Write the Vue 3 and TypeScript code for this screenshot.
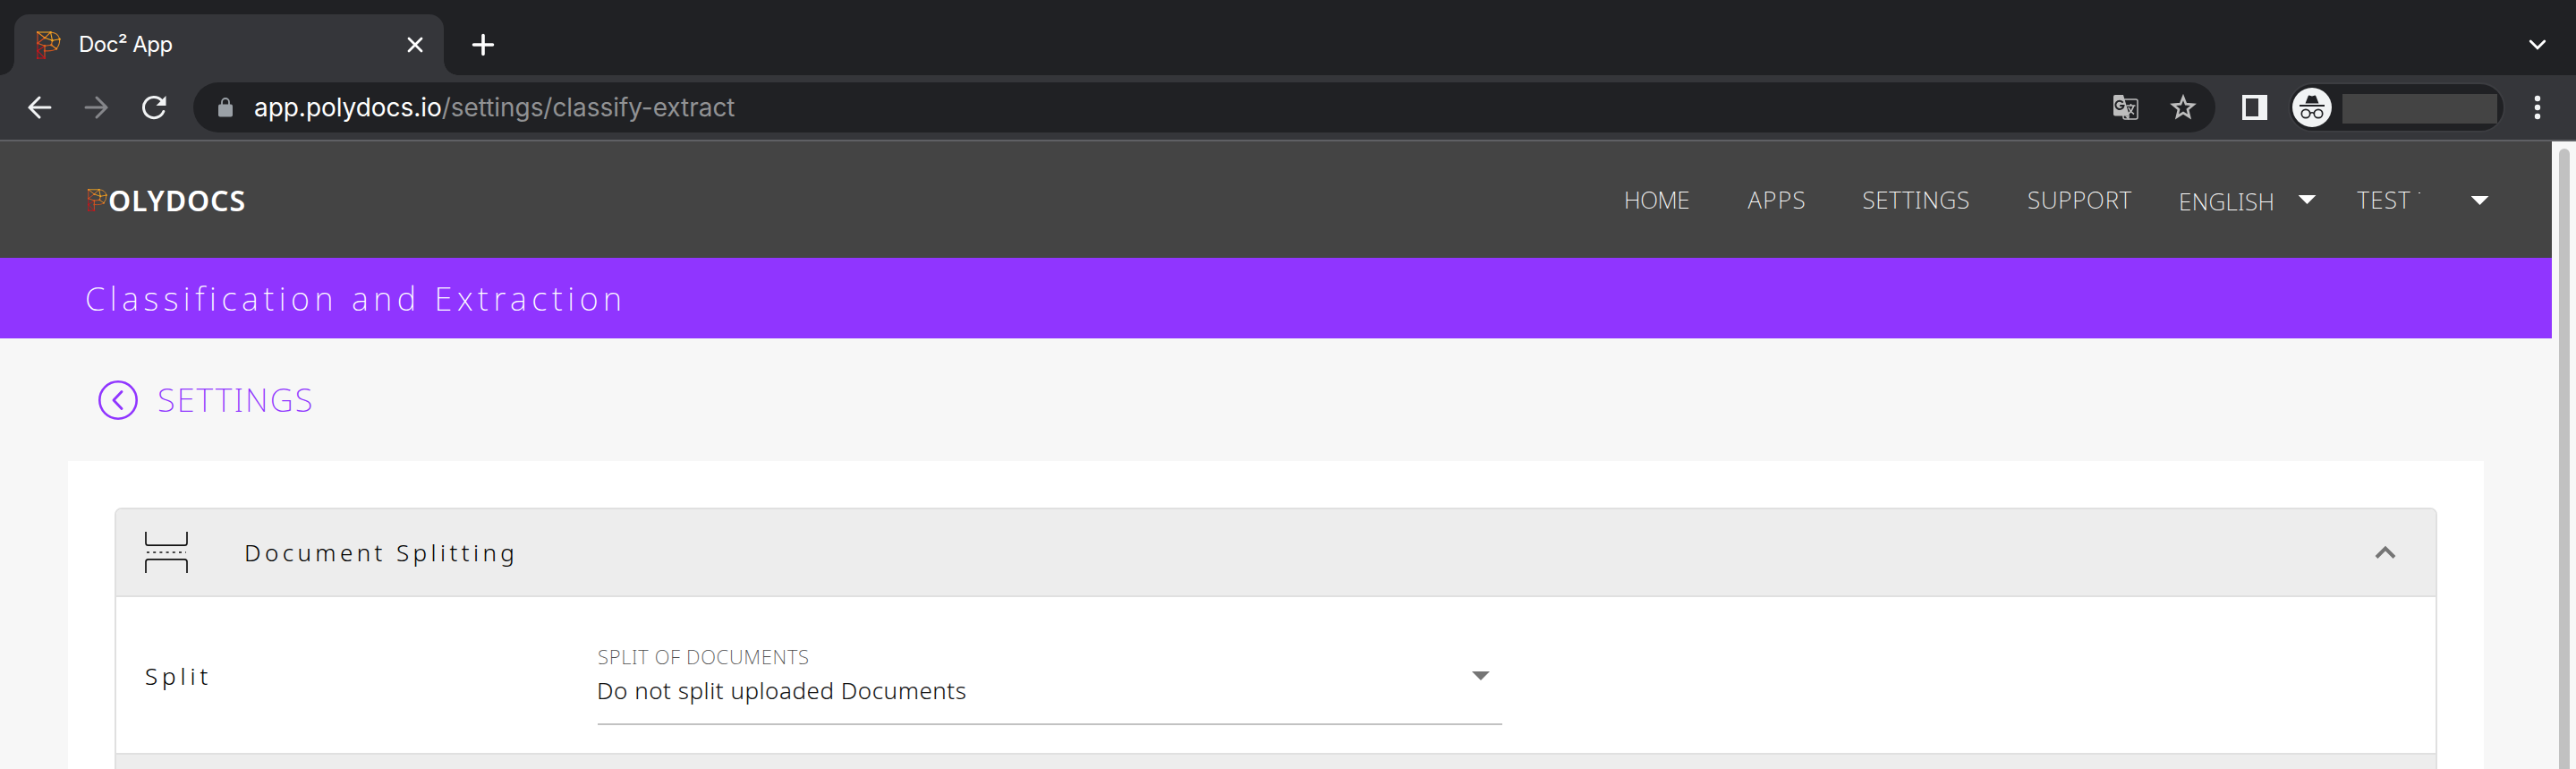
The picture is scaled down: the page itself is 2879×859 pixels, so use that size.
<script setup lang="ts">
import { ref } from 'vue'

interface NavItem { label: string; cls: string }

const nav: NavItem[] = [
  { label: 'HOME', cls: 'home' },
  { label: 'APPS', cls: 'apps' },
  { label: 'SETTINGS', cls: 'settings' },
  { label: 'SUPPORT', cls: 'support' },
]

// Nodes and edges of the wireframe "P" mark
const nodes: [number, number, string][] = [
  [1, 1, '#f08a24'], [15.6, 1, '#f5a623'], [25.6, 8.7, '#f9a01b'], [22, 19.5, '#f08a24'],
  [16.4, 15.3, '#e87b22'], [9, 21.7, '#d8491f'], [9, 30, '#c4161c'], [1, 30, '#c4161c'],
  [1, 21.7, '#c4161c'], [1, 13.3, '#d8491f'], [9, 7.3, '#f08a24'], [17.5, 10.3, '#f5a623'],
  [9, 16.3, '#e0601f'],
]
const edges: [number, number][] = [
  [0, 1], [0, 9], [9, 8], [8, 7], [7, 6], [6, 5], [5, 12], [0, 10], [1, 10], [10, 9], [9, 12],
  [12, 8], [8, 6], [10, 11], [11, 4], [4, 12], [1, 11], [11, 2], [4, 3],
]

const open = ref(true)
</script>

<template>
  <div class="window">
    <svg class="defs" width="0" height="0">
      <defs>
        <symbol id="mark" viewBox="0 0 27 31" preserveAspectRatio="none">
          <line v-for="([a, b], i) in edges" :key="'e' + i" :x1="nodes[a][0]" :y1="nodes[a][1]" :x2="nodes[b][0]" :y2="nodes[b][1]" :stroke="nodes[b][2]" stroke-width="1.100" />
          <path d="M15.6 1Q24 1.500 25.600 8.700Q26 15 22 19.500" fill="none" stroke="#e08c28" stroke-width="1.100" />
          <path d="M22 19.500Q18 22.500 9 21.700" fill="none" stroke="#c8541f" stroke-width="1.100" />
          <circle v-for="(n, i) in nodes" :key="'n' + i" :cx="n[0]" :cy="n[1]" r="1.2" :fill="n[2]" />
        </symbol>
      </defs>
    </svg>

    <div class="tabstrip">
      <div class="tab">
        <svg class="favicon" width="27" height="31"><use href="#mark" /></svg>
        <span class="tab-title">Doc² App</span>
        <svg class="close" width="18" height="18" viewBox="0 0 18 18"><path d="M2 2L16 16M16 2L2 16" stroke="#fff" stroke-width="2.8" stroke-linecap="round" /></svg>
      </div>
      <svg class="plus" width="26" height="26" viewBox="0 0 26 26"><path d="M13 2.500V23.500M2.500 13H23.500" stroke="#fff" stroke-width="3.6" stroke-linecap="round" /></svg>
      <svg class="tabs-menu" width="20" height="12" viewBox="0 0 20 12"><path d="M2.200 2L10 9.800L17.800 2" fill="none" stroke="#fff" stroke-width="2.8" stroke-linecap="round" /></svg>
    </div>

    <div class="toolbar">
      <svg class="back" width="28" height="28" viewBox="0 0 28 28"><path d="M26 14H3M14 3L3 14L14 25" fill="none" stroke="#f1f3f4" stroke-width="3" stroke-linecap="round" /></svg>
      <svg class="forward" width="28" height="28" viewBox="0 0 28 28"><path d="M2 14H25M14 3L25 14L14 25" fill="none" stroke="#85868a" stroke-width="3" stroke-linecap="round" /></svg>
      <svg class="reload" width="28" height="28" viewBox="0 0 28 28"><path d="M24.800 18.500A11.600 11.600 0 1 1 22.500 6" fill="none" stroke="#f1f3f4" stroke-width="3" stroke-linecap="round" /><path d="M27.500 1V12H16.500Z" fill="#f1f3f4" /></svg>
      <div class="omnibox">
        <svg class="lock" width="16" height="22" viewBox="0 0 16 22"><rect y="7.500" width="16" height="14" rx="2" fill="#9aa0a6" /><path d="M4 9V5A4 4 0 0 1 12 5V9" fill="none" stroke="#9aa0a6" stroke-width="1.8" /></svg>
        <span class="url"><b>app.polydocs.io</b>/settings/classify-extract</span>
        <svg class="translate" width="28" height="28" viewBox="0 0 28 28">
          <rect x="11" y="5" width="16" height="22" rx="2" fill="none" stroke="#bdbdbd" stroke-width="1.500" />
          <path d="M2 0H11L18 23.500H2A2 2 0 0 1 0 21.500V2A2 2 0 0 1 2 0Z" fill="#bdbdbd" />
          <path d="M13 23.500L17 28L18 23.500Z" fill="#bdbdbd" />
          <path d="M10.700 8.600A4.600 4.600 0 1 0 11.500 12H7.200" fill="none" stroke="#202124" stroke-width="2" />
          <path d="M14.500 12H24.500M19.500 10V12M22.500 12.500Q21 18 16.800 21M16.800 14Q19 19 23 21.500" fill="none" stroke="#bdbdbd" stroke-width="1.600" />
        </svg>
        <svg class="star" width="30" height="29" viewBox="0 0 30 29"><path d="M15 3.500L18 11.200L26.500 11.800L20 17.200L22 25.500L15 21L8 25.500L10 17.200L3.500 11.800L12 11.200Z" fill="none" stroke="#bdbdbd" stroke-width="2.700" /></svg>
      </div>
      <svg class="panel-icon" width="28" height="28" viewBox="0 0 28 28"><path fill-rule="evenodd" d="M0 0H28V28H0ZM4 4V24H18V4Z" fill="#f1f3f4" /></svg>
      <div class="profile">
        <svg width="44" height="44" viewBox="0 0 44 44">
          <circle cx="22" cy="22" r="22" fill="#f1f3f4" />
          <path d="M14.500 17.500L17.500 9.800Q18 8.300 19.500 8.700L22 9.500L24.500 8.700Q26 8.300 26.500 9.800L29.500 17.500Z" fill="#202124" />
          <path d="M8 20H36" stroke="#202124" stroke-width="1.900" />
          <g fill="none" stroke="#202124" stroke-width="1.700"><circle cx="15" cy="29" r="4.700" /><circle cx="29" cy="29" r="4.700" /><path d="M19.700 28.500Q22 27 24.300 28.500" /></g>
        </svg>
        <span class="profile-name"></span>
      </div>
      <svg class="kebab" width="8" height="28" viewBox="0 0 8 28"><circle cx="4" cy="4" r="3.200" fill="#f1f3f4" /><circle cx="4" cy="14" r="3.200" fill="#f1f3f4" /><circle cx="4" cy="24" r="3.200" fill="#f1f3f4" /></svg>
    </div>

    <div class="viewport">
      <div class="page">
        <header class="header">
          <div class="brand"><svg width="22" height="25"><use href="#mark" /></svg><span>OLYDOCS</span></div>
          <nav class="nav">
            <a v-for="item in nav" :key="item.label" :class="item.cls">{{ item.label }}</a>
            <a class="lang">ENGLISH</a>
            <i class="caret lang-caret"></i>
            <a class="user">TEST</a>
            <i class="tick"></i>
            <i class="caret user-caret"></i>
          </nav>
        </header>
        <div class="title">Classification and Extraction</div>
        <div class="crumb">
          <svg width="46" height="46" viewBox="0 0 46 46"><circle cx="23" cy="23" r="20.700" fill="none" stroke="#9035ff" stroke-width="2.600" /><path d="M27 13.500L18 23L27 32.500" fill="none" stroke="#9035ff" stroke-width="2.900" stroke-linecap="round" stroke-linejoin="round" /></svg>
          <span>SETTINGS</span>
        </div>
        <main class="card">
          <section class="panel">
            <div class="panel-head" @click="open = !open">
              <svg class="split-icon" width="48" height="46" viewBox="0 0 48 46">
                <g fill="none" stroke="#111" stroke-width="1.700">
                  <path d="M1 0V12.500Q1 15.200 3.700 15.200H44.300Q47 15.200 47 12.500V0" />
                  <path d="M1 46V33.500Q1 30.800 3.700 30.800H44.300Q47 30.800 47 33.500V46" />
                  <path d="M2 23H46" stroke-dasharray="3 4.200" />
                </g>
              </svg>
              <span>Document Splitting</span>
              <svg class="chev" width="26" height="18" viewBox="0 0 26 18"><path d="M3 14.500L13 4.500L23 14.500" fill="none" stroke="#757575" stroke-width="4" /></svg>
            </div>
            <div v-if="open" class="panel-body">
              <span class="row-label">Split</span>
              <div class="select">
                <div class="select-text">
                  <span class="select-label">SPLIT OF DOCUMENTS</span>
                  <span class="select-value">Do not split uploaded Documents</span>
                </div>
                <i class="caret select-caret"></i>
              </div>
            </div>
            <div class="panel-next"></div>
          </section>
        </main>
      </div>
      <div class="scrollbar"><div class="thumb"></div></div>
    </div>
  </div>
</template>

<style>
html, body { margin: 0; overflow: hidden; }
</style>

<style scoped>
* { box-sizing: border-box; }
svg { display: block; flex: none; }
.defs { position: absolute; }
.window { width: 2879px; height: 859px; overflow: hidden; display: flex; flex-direction: column; font-family: "Noto Sans", sans-serif; font-weight: 200; }

.tabstrip { flex: none; height: 84px; background: #202124; display: flex; align-items: center; padding-top: 16px; }
.tab { position: relative; flex: none; width: 480px; height: 68px; margin-left: 16px; background: #35363a; border-radius: 16px 16px 0 0; display: flex; align-items: center; padding: 0 23px 0 25px; }
.tab::before, .tab::after { content: ""; position: absolute; bottom: 0; width: 16px; height: 16px; }
.tab::before { left: -16px; background: radial-gradient(circle at 0 0, #202124 15.5px, #35363a 16px); }
.tab::after { right: -16px; background: radial-gradient(circle at 100% 0, #202124 15.5px, #35363a 16px); }
.tab-title { margin: -1px 0 0 20px; font: 400 24px/30px Inter, sans-serif; letter-spacing: -0.5px; color: #fff; }
.close { margin-left: auto; }
.plus { margin-left: 31px; }
.tabs-menu { margin-left: auto; margin-right: 33px; }

.toolbar { flex: none; height: 74px; background: #35363a; border-bottom: 2px solid #5f6064; display: flex; align-items: center; }
.back { margin-left: 30px; }
.forward { margin-left: 36px; }
.reload { margin-left: 36px; }
.omnibox { width: 2260px; height: 56px; margin-left: 30px; border-radius: 28px; background: #202124; display: flex; align-items: center; padding: 0 21px 0 28px; }
.url { margin-left: 24px; font: 400 28px/36px Inter, sans-serif; letter-spacing: -0.05px; color: #919294; white-space: nowrap; }
.url b { font-weight: 400; color: #fff; }
.translate { margin-left: auto; }
.star { margin-left: 35px; margin-top: -2px; }
.panel-icon { margin-left: 30px; }
.profile { width: 243px; height: 56px; margin-left: 23px; border: 2px solid #3c3d41; border-radius: 28px; background: #202124; display: flex; align-items: center; padding-left: 3px; overflow: hidden; }
.profile-name { flex: none; width: 173px; height: 33px; margin: 3px 0 0 12px; background: #444; }
.kebab { margin-left: 32px; }

.viewport { flex: 1; min-height: 0; display: flex; background: #f7f7f7; }
.page { width: 2852px; flex: none; overflow: hidden; }
.scrollbar { width: 27px; padding: 8px 7px 0 8px; }
.thumb { height: 800px; border-radius: 6px; background: #c1c1c1; }

.header { height: 130px; background: #444; display: flex; align-items: center; color: #fff; }
.brand { margin-left: 98px; display: flex; align-items: center; width: 240px; }
.brand span { margin-left: 1px; padding-top: 1px; font-weight: 600; font-size: 32px; line-height: 40px; letter-spacing: 0.9px; }
.nav { margin-left: auto; width: 1037px; display: flex; align-items: center; font-size: 26px; line-height: 36px; }
.nav a { flex: none; white-space: nowrap; }
.home { width: 138.500px; letter-spacing: -0.4px; }
.apps { width: 128px; letter-spacing: 1.5px; }
.settings { width: 184.500px; letter-spacing: 0.7px; }
.support { width: 169px; letter-spacing: 0.8px; }
.lang { width: 133.500px; letter-spacing: 0.3px; padding-top: 4px; }
.user { width: 68px; letter-spacing: 1.3px; }
.caret { flex: none; width: 20px; height: 10px; background: #fff; clip-path: polygon(0 0, 100% 0, 50% 100%); }
.lang-caret { margin-right: 46px; }
.tick { width: 2px; height: 1px; background: #ddd; margin: -15px 57px 0 0; }
.user-caret { margin-top: 2px; }

.title { height: 90px; line-height: 91px; padding-left: 95px; background: #9035ff; color: #fff; font-size: 36px; letter-spacing: 5.55px; }
.crumb { height: 137px; display: flex; align-items: center; padding-left: 109px; color: #9035ff; font-size: 36px; letter-spacing: 2.05px; }
.crumb span { margin-left: 21px; line-height: 46px; padding-top: 1px; }

.card { width: 2700px; height: 400px; margin-left: 76px; padding: 52px; background: #fff; }
.panel { height: 400px; border: 2px solid #e0e0e0; border-radius: 8px; overflow: hidden; }
.panel-head { height: 98px; border-bottom: 2px solid #e0e0e0; background: #ededed; display: flex; align-items: center; padding: 0 43px 0 32px; font-size: 26px; font-weight: 300; letter-spacing: 4.4px; color: #000; }
.panel-head span { margin-left: 63px; }
.chev { margin-left: auto; }
.panel-body { height: 176px; border-bottom: 2px solid #e0e0e0; display: flex; align-items: center; }
.row-label { width: 506px; padding: 2px 0 0 32px; font-size: 26px; font-weight: 300; letter-spacing: 4.9px; color: #000; }
.select { width: 1011px; height: 96px; margin: 16px 0 0 32px; border-bottom: 2px solid #c2c2c2; display: flex; }
.select-text { display: flex; flex-direction: column; padding-top: 3px; }
.select-label { font-size: 22px; line-height: 32px; letter-spacing: 0.7px; color: #4a4a4a; }
.select-value { font-size: 26px; font-weight: 300; line-height: 36px; letter-spacing: 0.53px; color: #111; margin: 4px 0 0 -1px; }
.select-caret { margin: 36px 14px 0 auto; background: #757575; }
.panel-next { height: 200px; background: #ededed; }
</style>
